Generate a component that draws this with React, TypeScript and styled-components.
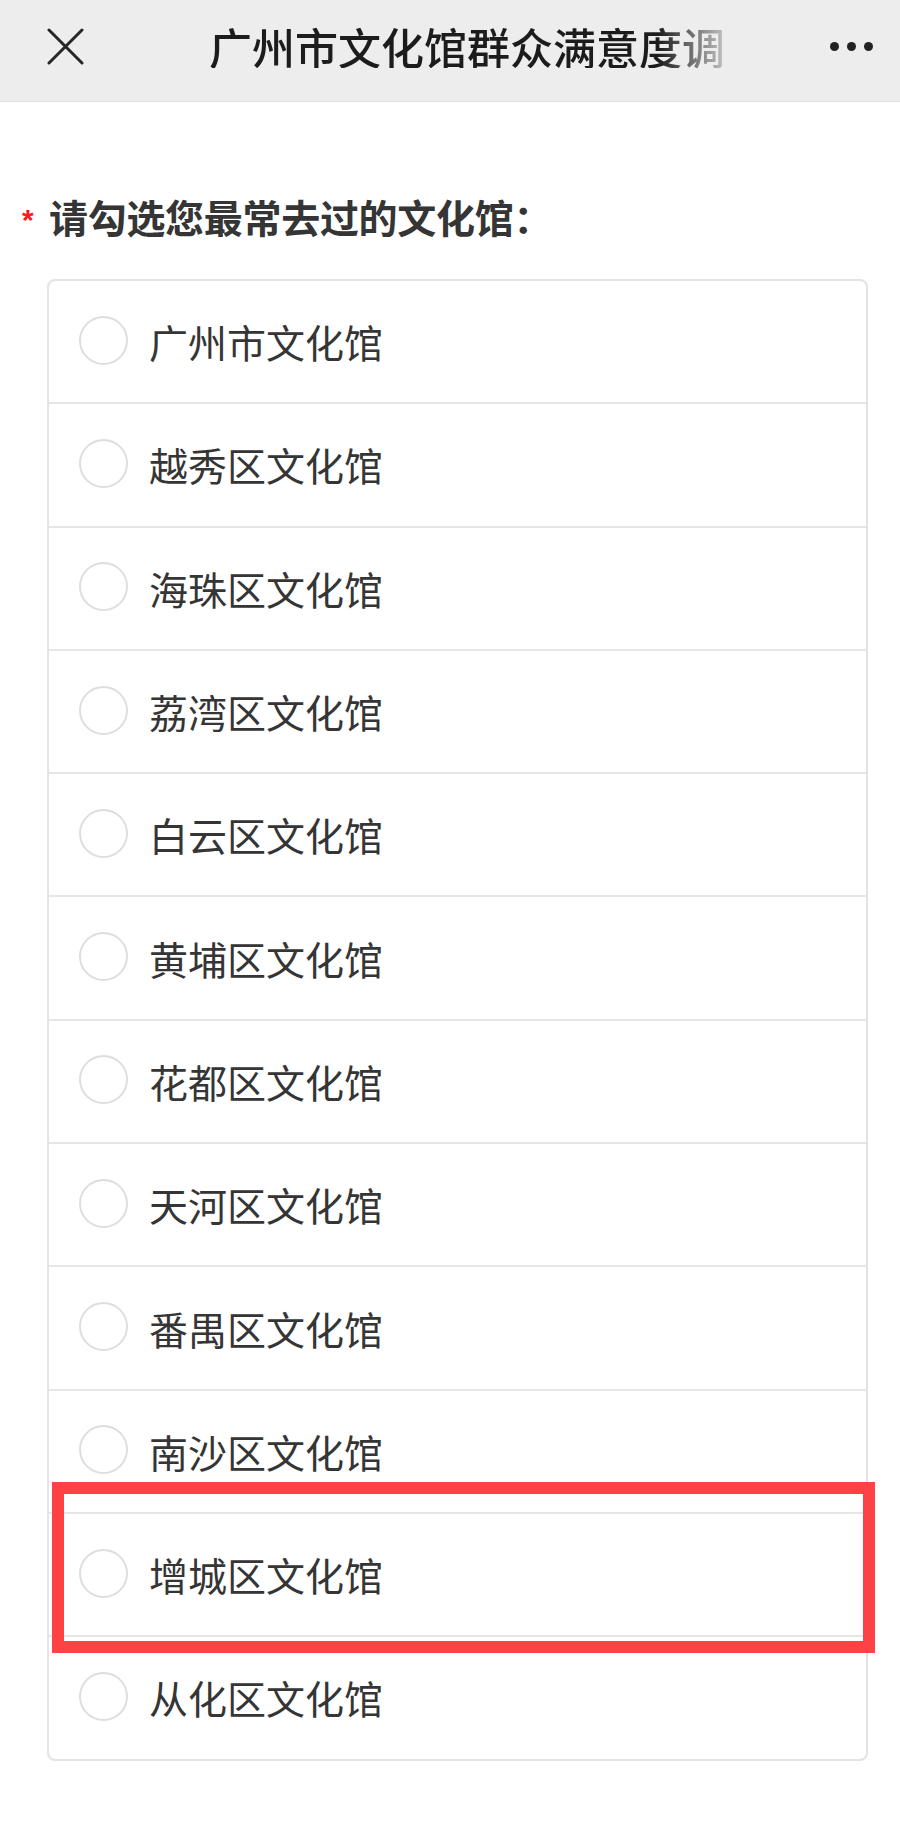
import React from "react";
import styled, { createGlobalStyle } from "styled-components";

const GlobalStyle = createGlobalStyle`
  html, body {
    margin: 0;
    padding: 0;
    background: #ffffff;
  }
  body {
    font-family: "Noto Sans CJK SC", "Noto Sans", sans-serif;
    -webkit-font-smoothing: antialiased;
  }
  * { box-sizing: border-box; }
`;

const Page = styled.div`
  width: 900px;
  min-height: 1832px;
  background: #ffffff;
`;

const TopBar = styled.header`
  height: 102px;
  background: #ededed;
  border-bottom: 1px solid #e2e2e2;
  display: flex;
  align-items: center;
  padding: 0 27px 9px 47px;
`;

const CloseButton = styled.button`
  width: 37px;
  height: 37px;
  padding: 0;
  border: none;
  background: transparent;
  display: flex;
  align-items: center;
  justify-content: center;
  color: #262626;
`;

const Title = styled.h1`
  margin: 0 0 0 125px;
  width: 516px;
  font-size: 43px;
  line-height: 1;
  font-weight: 500;
  color: #1c1c1c;
  white-space: nowrap;
  overflow: hidden;
  -webkit-mask-image: linear-gradient(90deg, #000 87%, rgba(0, 0, 0, 0.2) 100%);
  mask-image: linear-gradient(90deg, #000 87%, rgba(0, 0, 0, 0.2) 100%);
`;

const MoreButton = styled.div`
  margin-left: auto;
  display: flex;
  gap: 8px;
  align-items: center;
`;

const Dot = styled.span`
  width: 9px;
  height: 9px;
  border-radius: 50%;
  background: #222222;
`;

const Content = styled.main`
  padding: 89px 32px 0 20px;
`;

const Question = styled.div`
  display: flex;
  align-items: flex-start;
`;

const Required = styled.span`
  width: 29px;
  padding-left: 2px;
  color: #ff1a1a;
  font-family: "Liberation Sans", sans-serif;
  font-weight: 700;
  font-size: 30px;
  line-height: 1;
  margin-top: 14px;
`;

const QuestionText = styled.h2`
  margin: 0;
  font-size: 39px;
  line-height: 51px;
  font-weight: 700;
  color: #353535;
  letter-spacing: -0.3px;
`;

const OptionList = styled.div`
  margin: 37px 0 0 27px;
  width: 821px;
  border: 2px solid #e3e3e3;
  border-radius: 8px;
  background: #ffffff;
`;

const OptionRow = styled.label<{ $first?: boolean }>`
  position: relative;
  display: flex;
  align-items: center;
  height: ${(p) => (p.$first ? "121.3px" : "123.3px")};
  border-top: ${(p) => (p.$first ? "none" : "2px solid #e6e6e6")};
  padding-left: 30px;
  gap: 21px;
`;

const Radio = styled.span`
  width: 49px;
  height: 49px;
  border-radius: 50%;
  border: 2px solid #dedede;
  background: #ffffff;
  flex: none;
  margin-top: -3px;
`;

const OptionText = styled.span`
  font-size: 39px;
  line-height: 1;
  color: #353535;
  font-weight: 400;
`;

const Highlight = styled.div`
  position: absolute;
  z-index: 2;
  left: 3px;
  top: -32px;
  width: 823px;
  height: 171px;
  border: 12px solid #fe4144;
  pointer-events: none;
`;

const options = [
  "广州市文化馆",
  "越秀区文化馆",
  "海珠区文化馆",
  "荔湾区文化馆",
  "白云区文化馆",
  "黄埔区文化馆",
  "花都区文化馆",
  "天河区文化馆",
  "番禺区文化馆",
  "南沙区文化馆",
  "增城区文化馆",
  "从化区文化馆",
];

export default function App() {
  return (
    <>
      <GlobalStyle />
      <Page>
        <TopBar>
          <CloseButton aria-label="关闭">
            <svg width="37" height="37" viewBox="0 0 37 37">
              <path
                d="M2 2 L35 35 M35 2 L2 35"
                stroke="currentColor"
                strokeWidth="3"
                strokeLinecap="round"
                fill="none"
              />
            </svg>
          </CloseButton>
          <Title>广州市文化馆群众满意度调查问卷</Title>
          <MoreButton aria-label="更多">
            <Dot />
            <Dot />
            <Dot />
          </MoreButton>
        </TopBar>
        <Content>
          <Question>
            <Required>*</Required>
            <QuestionText>请勾选您最常去过的文化馆：</QuestionText>
          </Question>
          <OptionList>
            {options.map((name, i) => (
              <OptionRow key={name} $first={i === 0}>
                <Radio />
                <OptionText>{name}</OptionText>
                {name === "增城区文化馆" && <Highlight />}
              </OptionRow>
            ))}
          </OptionList>
        </Content>
      </Page>
    </>
  );
}
